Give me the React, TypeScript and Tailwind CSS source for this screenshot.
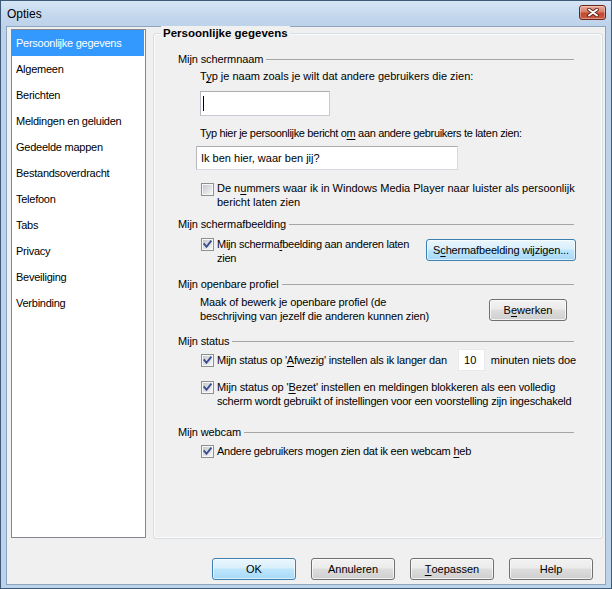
import React from "react";

const U = ({ children }: { children: React.ReactNode }) => (
  <span className="underline decoration-1 underline-offset-[2px]">{children}</span>
);

function Check({ checked }: { checked: boolean }) {
  return (
    <svg width="13" height="13" viewBox="0 0 13 13" className="shrink-0">
      <defs>
        <linearGradient id="cbfill" x1="0" y1="0" x2="1" y2="1">
          <stop offset="0" stopColor="#c5c9cf" />
          <stop offset="1" stopColor="#f4f4f4" />
        </linearGradient>
      </defs>
      <rect x="0.5" y="0.5" width="12" height="12" fill="#f7f7f7" stroke="#8e8f8f" />
      <rect x="2" y="2" width="9" height="9" fill="url(#cbfill)" />
      {checked && (
        <path
          d="M3.3 6.2 L5.5 8.8 L9.8 3.3"
          fill="none"
          stroke="#3c4f8c"
          strokeWidth="1.9"
          strokeLinecap="square"
        />
      )}
    </svg>
  );
}

function Btn({
  children,
  blue,
  className,
}: {
  children: React.ReactNode;
  blue?: boolean;
  className?: string;
}) {
  const base =
    "h-[22px] rounded-[3px] border flex items-center justify-center text-[11px] text-black shrink-0 ";
  const skin = blue
    ? "border-[#3c7fb1] bg-[linear-gradient(#eaf6fd,#d9f0fc_45%,#bee6fd_50%,#a7d9f5)] shadow-[inset_0_0_0_1px_rgba(255,255,255,0.6)] "
    : "border-[#707070] bg-[linear-gradient(#f2f2f2,#ebebeb_45%,#dddddd_50%,#cfcfcf)] shadow-[inset_0_0_0_1px_rgba(255,255,255,0.7)] ";
  return <div className={base + skin + (className ?? "")}>{children}</div>;
}

function Section({ title }: { title: string }) {
  return (
    <div className="flex items-center h-[14px] leading-[14px]">
      <span className="whitespace-nowrap tracking-[-0.1px]">{title}</span>
      <div className="flex-1 h-px bg-[#a5a5a5] ml-[3px] mr-[2px]" />
    </div>
  );
}

const items = [
  "Persoonlijke gegevens",
  "Algemeen",
  "Berichten",
  "Meldingen en geluiden",
  "Gedeelde mappen",
  "Bestandsoverdracht",
  "Telefoon",
  "Tabs",
  "Privacy",
  "Beveiliging",
  "Verbinding",
];

export default function App() {
  return (
    <div className="w-[612px] h-[589px] bg-[#bdd3ea] border border-[#3f5a78] flex flex-col font-['Liberation_Sans',Arial,sans-serif] text-[11px] text-black overflow-hidden">
      {/* title bar */}
      <div className="h-[25px] shrink-0 flex items-center justify-between pl-[6px] pr-[5px] bg-[linear-gradient(#d6e5f5,#c3d8ee_60%,#bdd3ea)]">
        <span className="text-[12px] leading-none mt-[1px]">Opties</span>
        <div className="w-[27px] h-[15px] -mt-[2px] rounded-[3px] border border-[#6b2418] bg-[linear-gradient(#eaa998,#d8806a_45%,#c24a30_55%,#cb5a3e)] shadow-[inset_0_0_0_1px_rgba(255,255,255,0.35)] flex items-center justify-center">
          <svg width="12" height="9" viewBox="0 0 12 9">
            <path d="M2 1.5 L10 7.5 M10 1.5 L2 7.5" stroke="#5a1a10" strokeWidth="3.6" strokeLinecap="round" />
            <path d="M2 1.5 L10 7.5 M10 1.5 L2 7.5" stroke="#ffffff" strokeWidth="2" strokeLinecap="round" />
          </svg>
        </div>
      </div>

      {/* content */}
      <div className="flex-1 mx-[5px] mb-[3px] bg-[#f0f0f0] border border-[#8fa5bf] flex flex-col">
        <div className="flex items-start">
          {/* list */}
          <div className="ml-[4px] mt-[2px] w-[135px] h-[509px] bg-white border border-[#828790] flex flex-col tracking-[-0.25px]">
            {items.map((t, i) => (
              <div
                key={t}
                className={
                  "h-[26px] flex items-center pl-[4px] pt-[1px] " +
                  (i === 0 ? "bg-[#3399ff] text-white mr-[1px]" : "")
                }
              >
                {t}
              </div>
            ))}
          </div>

          {/* panel */}
          <div className="relative ml-[7px] mt-[6px] w-[450px] h-[506px] border border-[#d5dfe5] rounded-[3px] shadow-[inset_0_0_0_1px_#fbfbfb]">
            <div className="absolute left-[7px] -top-[8px] px-[2px] bg-[#f0f0f0] font-bold text-[11.5px] leading-[15px]">
              Persoonlijke gegevens
            </div>

            <div className="flex flex-col pl-[24px] pr-[26px] leading-[14px]">
              {/* Mijn schermnaam */}
              <div className="mt-[18px]">
                <Section title="Mijn schermnaam" />
              </div>
              <div className="mt-[3px] ml-[22px] h-[14px]">
                T<U>y</U>p je naam zoals je wilt dat andere gebruikers die zien:
              </div>
              <div className="mt-[8px] ml-[22px] w-[130px] h-[25px] bg-white border border-[#c8ccd2] border-t-[#abadb3] border-l-[#b5b8be] flex items-center pl-[2px]">
                <div className="w-px h-[15px] bg-black" />
              </div>
              <div className="mt-[10px] ml-[22px] h-[14px] whitespace-nowrap tracking-[-0.33px]">
                Typ hier je persoonlijke bericht o<U>m</U> aan andere gebruikers te laten zien:
              </div>
              <div className="mt-[6px] ml-[18px] w-[262px] h-[24px] bg-white border border-[#d7dbe1] border-t-[#abadb3] border-l-[#b5b8be] flex items-center pl-[4px]">
                Ik ben hier, waar ben jij?
              </div>
              <div className="mt-[11px] ml-[23px] flex items-start">
                <div className="mt-[2px]">
                  <Check checked={false} />
                </div>
                <div className="ml-[3px] whitespace-nowrap">
                  De n<U>u</U>mmers waar ik in Windows Media Player naar luister als persoonlijk
                  <br />
                  bericht laten zien
                </div>
              </div>

              {/* Mijn schermafbeelding */}
              <div className="mt-[8px]">
                <Section title="Mijn schermafbeelding" />
              </div>
              <div className="mt-[6px] ml-[23px] flex items-start">
                <div className="mt-[1px]">
                  <Check checked={true} />
                </div>
                <div className="ml-[3px] whitespace-nowrap tracking-[-0.25px]">
                  Mijn scherma<U>f</U>beelding aan anderen laten
                  <br />
                  zien
                </div>
                <Btn blue className="ml-auto mt-[2px] w-[150px] tracking-[-0.15px]">
                  S<U>c</U>hermafbeelding wijzigen...
                </Btn>
              </div>

              {/* Mijn openbare profiel */}
              <div className="mt-[12px]">
                <Section title="Mijn openbare profiel" />
              </div>
              <div className="mt-[4px] ml-[22px] flex items-start">
                <div className="whitespace-nowrap tracking-[-0.12px]">
                  Maak of bewerk je openbare profiel (de
                  <br />
                  beschrijving van jezelf die anderen kunnen zien)
                </div>
                <Btn className="ml-auto mr-[9px] mt-[4px] w-[78px]">
                  B<U>e</U>werken
                </Btn>
              </div>

              {/* Mijn status */}
              <div className="mt-[11px]">
                <Section title="Mijn status" />
              </div>
              <div className="mt-[1px] ml-[23px] h-[22px] flex items-center">
                <Check checked={true} />
                <div className="ml-[3px] w-[244px] whitespace-nowrap tracking-[-0.2px]">
                  Mijn status op '<U>A</U>fwezig' instellen als ik langer dan
                </div>
                <div className="w-[27px] h-[22px] bg-white border border-[#e6e9ee] flex items-center pl-[5px]">
                  10
                </div>
                <div className="ml-[6px] whitespace-nowrap tracking-[-0.1px]">minuten niets doe</div>
              </div>
              <div className="mt-[9px] ml-[23px] flex items-start">
                <div className="mt-[1px]">
                  <Check checked={true} />
                </div>
                <div className="ml-[3px] whitespace-nowrap flex flex-col">
                  <span className="tracking-[-0.1px]">
                    Mijn status op '<U>B</U>ezet' instellen en meldingen blokkeren als een volledig
                  </span>
                  <span className="tracking-[-0.2px]">
                    scherm wordt gebruikt of instellingen voor een voorstelling zijn ingeschakeld
                  </span>
                </div>
              </div>

              {/* Mijn webcam */}
              <div className="mt-[17px]">
                <Section title="Mijn webcam" />
              </div>
              <div className="mt-[5px] ml-[23px] flex items-start">
                <div className="mt-[1px]">
                  <Check checked={true} />
                </div>
                <div className="ml-[3px] whitespace-nowrap tracking-[-0.24px]">
                  Andere gebruikers mogen zien dat ik een webcam <U>h</U>eb
                </div>
              </div>
            </div>
          </div>
        </div>

        {/* buttons */}
        <div className="mt-[19px] flex justify-end gap-[15px] pr-[12px]">
          <Btn blue className="w-[84px] border-[#2c628b] shadow-[inset_0_0_0_1px_rgba(255,255,255,0.6),0_0_2px_#6fc3f0]">
            OK
          </Btn>
          <Btn className="w-[84px]">Annuleren</Btn>
          <Btn className="w-[84px]">
            <U>T</U>oepassen
          </Btn>
          <Btn className="w-[84px]">Help</Btn>
        </div>
      </div>
    </div>
  );
}
